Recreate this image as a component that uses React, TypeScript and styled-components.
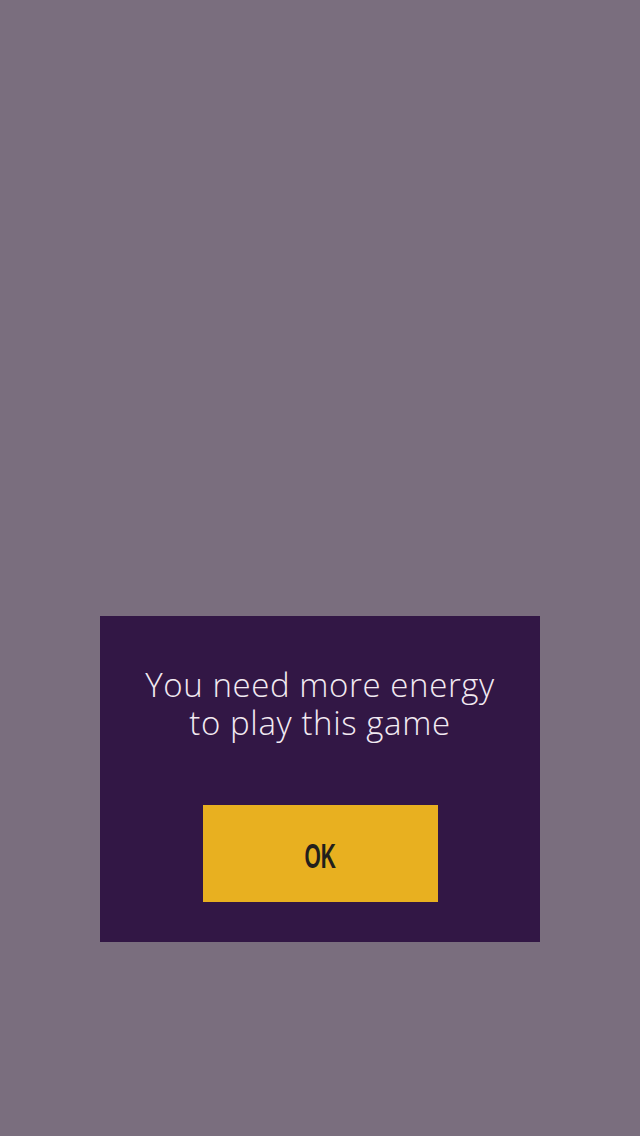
import React from "react";
import styled, { createGlobalStyle } from "styled-components";

const GlobalStyle = createGlobalStyle`
  html, body {
    margin: 0;
    padding: 0;
    background: #7a6e7e;
  }
  #root {
    min-height: 1136px;
  }
`;

const Screen = styled.main({
  width: '640px',
  height: '1136px',
  display: 'flex',
  flexDirection: 'column',
  alignItems: 'center',
  paddingTop: '616px',
  boxSizing: 'border-box',
  background: '#7a6e7e',
});

const Dialog = styled.section({
  width: '440px',
  height: '326px',
  background: '#321745',
  display: 'flex',
  flexDirection: 'column',
  alignItems: 'center',
  boxSizing: 'border-box',
  paddingTop: '50px',
});

const Message = styled.div({
  display: 'flex',
  flexDirection: 'column',
  alignItems: 'center',
  fontFamily: '"Open Sans", "Noto Sans", sans-serif',
  fontWeight: 300,
  fontSize: '33px',
  letterSpacing: '0.6px',
  color: '#f2eaf2',
});

const MessageLine = styled.span({
  display: 'block',
  height: '38px',
  lineHeight: '38px',
  whiteSpace: 'nowrap',
});

const OkButton = styled.button({
  marginTop: '63px',
  width: '235px',
  height: '97px',
  border: 'none',
  borderRadius: 0,
  background: '#e8b020',
  display: 'flex',
  alignItems: 'center',
  justifyContent: 'center',
  padding: 0,
  cursor: 'pointer',
});

const OkLabel = styled.span({
  display: 'inline-block',
  fontFamily: '"Liberation Sans", Arial, sans-serif',
  fontWeight: 700,
  fontSize: '35px',
  color: '#231f1c',
  transform: 'scaleX(0.6)',
  marginTop: '4px',
});

export default function App() {
  return (
    <React.Fragment>
      <GlobalStyle />
      <Screen>
        <Dialog>
          <Message>
            <MessageLine>You need more energy</MessageLine>
            <MessageLine>to play this game</MessageLine>
          </Message>
          <OkButton>
            <OkLabel>OK</OkLabel>
          </OkButton>
        </Dialog>
      </Screen>
    </React.Fragment>
  );
}
